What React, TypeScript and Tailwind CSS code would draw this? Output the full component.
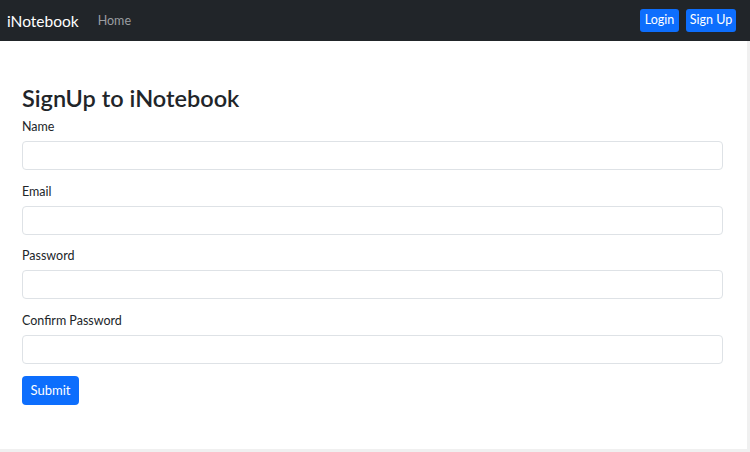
import React from 'react';

const fields = [
  { id: 'name', label: 'Name', type: 'text' },
  { id: 'email', label: 'Email', type: 'email' },
  { id: 'password', label: 'Password', type: 'password' },
  { id: 'cpassword', label: 'Confirm Password', type: 'password' },
];

const Navbar: React.FC = () => (
  <nav className="h-[41px] bg-[#212529] flex items-center justify-between pl-[7px] pr-[14px]">
    <div className="flex items-center pt-[2px]">
      <span className="text-white text-[15.5px] leading-none">iNotebook</span>
      <span className="ml-[19px] text-[12.5px] leading-none text-[#9a9da0]">Home</span>
    </div>
    <div className="flex items-center gap-[7px]">
      <button className="h-[23px] w-[39px] rounded-[3px] bg-[#0d6efd] text-white text-[12.5px]">Login</button>
      <button className="h-[23px] w-[50px] rounded-[3px] bg-[#0d6efd] text-white text-[12.5px]">Sign Up</button>
    </div>
  </nav>
);

export default function App() {
  return (
    <div className="w-[750px] h-[452px] bg-white text-[#212529] font-['Lato',_'Open_Sans',_sans-serif] overflow-hidden">
      <Navbar />
      <main className="h-[411px] border-r-[3px] border-b-[3px] border-[#f0f0f0] pl-[22px] pr-[24px] pt-[43px]">
        <h2 className="text-[23.5px] leading-[29px] font-semibold mb-[4px]">SignUp to iNotebook</h2>
        <form onSubmit={e => e.preventDefault()}>
          {fields.map(f => (
            <div key={f.id} className="mb-[11.5px]">
              <label htmlFor={f.id} className="block text-[12.5px] leading-[19px] mb-[5px]">{f.label}</label>
              <input
                id={f.id}
                type={f.type}
                className="block w-full h-[29px] border border-[#dee2e6] rounded-[4px] bg-white px-2 text-[13px] outline-none"
              />
            </div>
          ))}
          <button type="submit" className="mt-[1px] h-[29px] w-[57px] rounded-[4px] bg-[#0d6efd] text-white text-[13px]">
            Submit
          </button>
        </form>
      </main>
    </div>
  );
}
